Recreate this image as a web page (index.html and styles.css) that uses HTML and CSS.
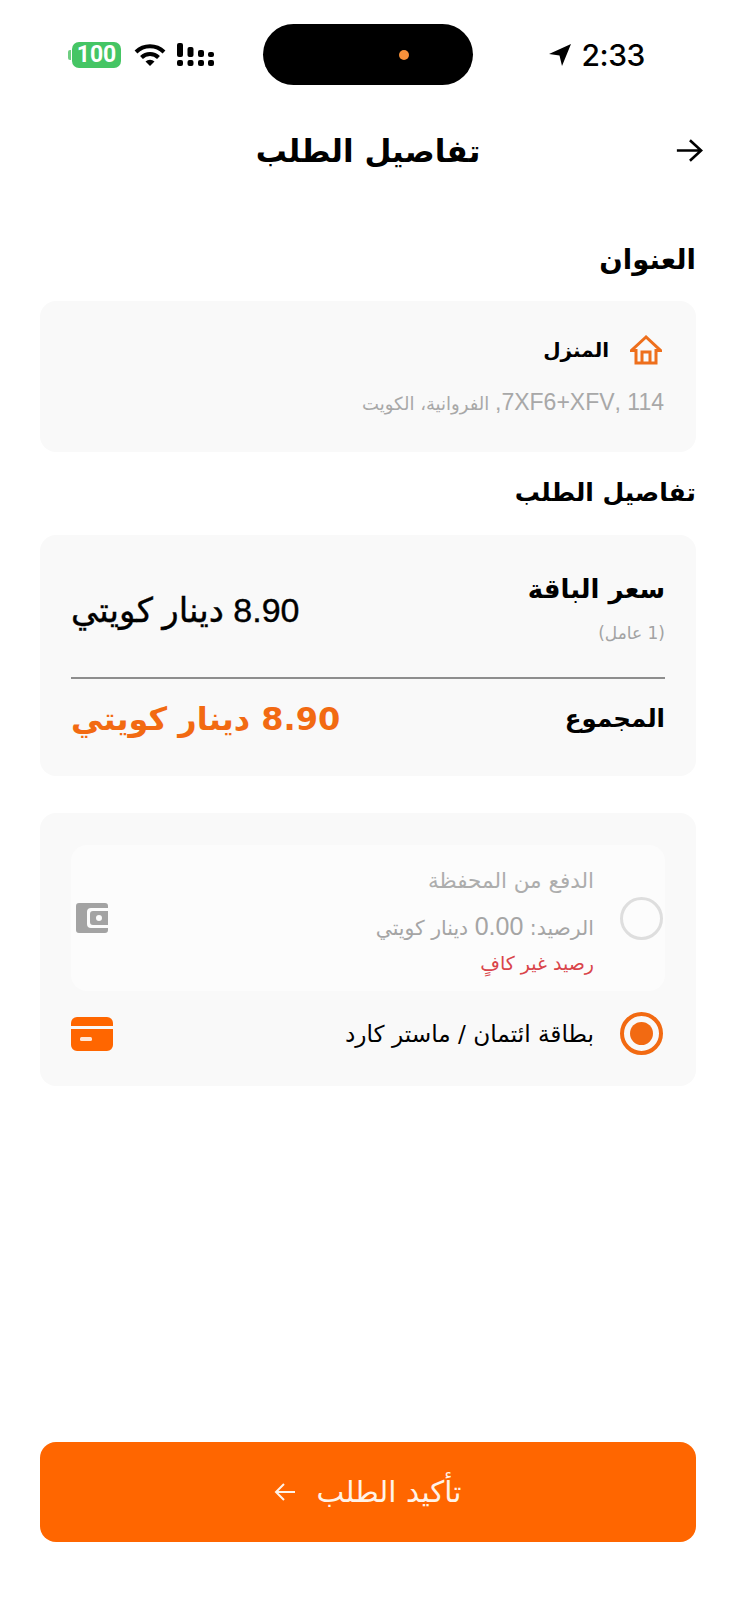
FILE: index.html
```html
<!DOCTYPE html>
<html lang="ar" dir="rtl">
<head>
<meta charset="utf-8">
<title>تفاصيل الطلب</title>
<link rel="stylesheet" href="styles.css">
</head>
<body>
<div class="page">
  <div class="status">
    <div class="status-side status-right" dir="ltr">
      <svg class="loc" viewBox="0 0 24 24" width="24" height="24"><path d="M23 1 1 11l10.5 1.500L14 23z" fill="#000"/></svg>
      <span class="time">2:33</span>
    </div>
    <div class="island"><span class="dot"></span></div>
    <div class="status-side status-left" dir="ltr">
      <span class="batt-nub"></span><span class="batt">100</span>
      <svg class="wifi" viewBox="0 0 32 24" width="32" height="24"><path d="M2 9a20 20 0 0 1 28 0M7.500 14.500a12 12 0 0 1 17 0" fill="none" stroke="#000" stroke-width="4"/><path d="M11.500 18.500a6.500 6.500 0 0 1 9 0L16 23z" fill="#000"/></svg>
      <svg class="signal" viewBox="0 0 38 24" width="38" height="24"><g fill="#000"><rect x="0" y="0" width="6" height="14" rx="2"/><rect x="0" y="17" width="6" height="6" rx="2"/><rect x="10.500" y="4" width="6" height="10" rx="2"/><rect x="10.500" y="17" width="6" height="6" rx="2"/><rect x="21" y="7" width="6" height="7" rx="2"/><rect x="21" y="17" width="6" height="6" rx="2"/><rect x="31" y="9" width="6" height="5" rx="2"/><rect x="31" y="17" width="6" height="6" rx="2"/></g></svg>
    </div>
  </div>

  <header class="topbar">
    <svg class="back" viewBox="0 0 30 26" width="28" height="25"><path d="M2 13h26M16 2l12 11-12 11" fill="none" stroke="#000" stroke-width="2.800"/></svg>
    <h1 class="page-title">تفاصيل الطلب</h1>
  </header>

  <main class="content">
    <h2 class="section-title first">العنوان</h2>
    <section class="card address">
      <div class="addr-head">
        <svg class="home" viewBox="0 0 32 30" width="32" height="30"><path d="M16 2 1.500 15.500H6V28h20V15.500h4.500z M12 28V17h8v11" fill="none" stroke="#ee6f1c" stroke-width="3" stroke-linejoin="miter"/></svg>
        <span class="addr-name">المنزل</span>
      </div>
      <p class="addr-line"><span class="latin-addr">114 ,7XF6+XFV,</span> الفروانية، الكويت</p>
    </section>

    <h2 class="section-title second">تفاصيل الطلب</h2>
    <section class="card order">
      <div class="row row-price">
        <div>
          <div class="label">سعر الباقة</div>
          <div class="note">(1 عامل)</div>
        </div>
        <div class="value">8.90 دينار كويتي</div>
      </div>
      <hr class="rule">
      <div class="row row-total">
        <div class="label total-label">المجموع</div>
        <div class="value-total">8.90 دينار كويتي</div>
      </div>
    </section>

    <section class="card pay">
      <div class="pay-wallet">
        <span class="radio"></span>
        <div class="pay-text">
          <div class="wallet-title">الدفع من المحفظة</div>
          <div class="wallet-bal">الرصيد: <span class="latin-bal">0.00</span> دينار كويتي</div>
          <div class="wallet-err">رصيد غير كافٍ</div>
        </div>
        <svg class="wallet-ico" viewBox="0 0 32 30" width="32" height="30"><path d="M3 0h26a3 3 0 0 1 3 3v2H15a4 4 0 0 0-4 4v12a4 4 0 0 0 4 4h17v2a3 3 0 0 1-3 3H3a3 3 0 0 1-3-3V3a3 3 0 0 1 3-3z" fill="#a3a3a3"/><path d="M17 8h15v14H17a3 3 0 0 1-3-3v-8a3 3 0 0 1 3-3zm6 4a3 3 0 1 0 0 6 3 3 0 0 0 0-6z" fill="#a3a3a3"/></svg>
      </div>
      <div class="pay-card">
        <span class="radio on"><span class="radio-dot"></span></span>
        <div class="card-label">بطاقة ائتمان / ماستر كارد</div>
        <svg class="card-ico" viewBox="0 0 42 34" width="42" height="34"><path d="M6 0h30a6 6 0 0 1 6 6v3H0V6a6 6 0 0 1 6-6zM0 12h42v16a6 6 0 0 1-6 6H6a6 6 0 0 1-6-6z" fill="#ff6600"/><rect x="9" y="20" width="12" height="4" rx="1.500" fill="#ffe6d5"/></svg>
      </div>
    </section>
  </main>

  <footer class="foot">
    <button class="confirm" type="button">
      <span>تأكيد الطلب</span>
      <svg class="btn-arrow" viewBox="0 0 22 18" width="22" height="18"><path d="M21 9H2M10 1 2 9l8 8" fill="none" stroke="#fff3e8" stroke-width="2"/></svg>
    </button>
  </footer>
</div>
</body>
</html>
```
FILE: styles.css
```css
* { box-sizing: border-box; }
html, body { margin: 0; padding: 0; background: #fff; }
body { font-family: "DejaVu Sans", "Liberation Sans", sans-serif; color: #000; }
.page { width: 736px; height: 1600px; display: flex; flex-direction: column; overflow: hidden; }

.status { display: grid; grid-template-columns: 1fr 210px 1fr; padding-top: 24px; height: 86px; }
.status-side { display: flex; align-items: center; height: 62px; }
.status-right { padding-right: 91px; gap: 9px; justify-content: flex-end; }
.time { font: 500 30px "Inter", sans-serif; letter-spacing: -0.4px; }
.island { height: 61px; border-radius: 31px; background: #000; display: flex; align-items: center; justify-content: center; }
.dot { width: 10px; height: 10px; border-radius: 50%; background: #f7913a; margin-right: -72px; }
.status-left { padding-left: 68px; }
.batt-nub { width: 3px; height: 10px; background: #6fce82; border-radius: 2px 0 0 2px; margin-right: 1px; }
.batt { width: 49px; height: 26px; border-radius: 7px; background: #45c564; color: #fff; font: 700 23px/26px "Roboto", sans-serif; text-align: center; }
.wifi { margin-left: 13px; }
.signal { margin-left: 11px; }

.topbar { position: relative; height: 140px; display: flex; align-items: center; justify-content: center; padding-bottom: 11px; }
.back { position: absolute; right: 33px; top: 52px; }
.page-title { margin: 0; font-size: 31px; font-weight: 700; line-height: 44px; }

.content { padding: 0 40px; display: flex; flex-direction: column; }
.section-title { margin: 0; font-weight: 700; line-height: 36px; }
.section-title.first { margin-top: 15px; height: 60px; font-size: 27.5px; }
.section-title.second { margin-top: 23px; height: 60px; font-size: 25px; }
.card { background: #f9f9f9; border-radius: 16px; }

.address { height: 151px; padding: 31px 32px 0; }
.addr-head { display: flex; align-items: center; gap: 21px; height: 36px; }
.home { flex: none; margin-right: 2px; }
.addr-name { font-size: 20px; font-weight: 700; }
.addr-line { margin: 19px 0 0; font-size: 18px; line-height: 30px; color: #a8a8a8; }
.latin-addr { font-family: "Liberation Sans", sans-serif; font-size: 23px; }

.order { height: 241px; padding: 35px 31px 0; }
.row { display: flex; justify-content: space-between; }
.row-price { height: 107px; align-items: flex-start; }
.label { font-size: 26px; font-weight: 700; line-height: 38px; }
.total-label { font-size: 24.5px; }
.note { font-size: 17px; color: #a3a3a3; line-height: 24px; margin-top: 13px; }
.value { font-family: "Liberation Sans", "DejaVu Sans", sans-serif; font-size: 34px; line-height: 40px; margin-top: 20px; -webkit-text-stroke: 0.4px #000; }
.rule { margin: 0; border: 0; height: 2px; background: #8e8e8e; }
.row-total { margin-top: 20px; align-items: center; height: 40px; }
.value-total { font-size: 32px; font-weight: 700; color: #f26a12; line-height: 44px; }

.pay { height: 273px; margin-top: 37px; padding: 32px 31px 0; display: flex; flex-direction: column; }
.pay-wallet { height: 146px; display: flex; align-items: center; gap: 26px; background: #fcfcfc; border-radius: 16px; padding: 0 2px 0 5px; }
.radio { flex: none; width: 43px; height: 43px; border-radius: 50%; border: 3px solid #dedede; display: flex; align-items: center; justify-content: center; }
.radio.on { border-color: #f26a12; border-width: 4px; }
.radio-dot { width: 23px; height: 23px; border-radius: 50%; background: #f26a12; }
.pay-text { flex: 1; padding-top: 2px; }
.wallet-title { font-size: 21.5px; line-height: 34px; color: #adadad; }
.wallet-bal { font-size: 20.4px; line-height: 32px; color: #a5a5a5; margin-top: 12px; }
.latin-bal { font-family: "Liberation Sans", sans-serif; font-size: 25px; }
.wallet-err { font-size: 19px; line-height: 24px; color: #d9444a; margin-top: 7px; }
.wallet-ico { flex: none; }
.pay-card { margin-top: 21px; display: flex; align-items: center; gap: 26px; height: 43px; padding-right: 2px; }
.card-label { flex: 1; font-size: 23.2px; line-height: 34px; }
.card-ico { flex: none; }

.foot { margin-top: auto; padding: 0 40px 58px; }
.confirm { width: 100%; height: 100px; border: 0; border-radius: 16px; background: #ff6600; color: #fff3e8; font: 400 29.5px "DejaVu Sans", sans-serif; display: flex; align-items: center; justify-content: center; gap: 20px; }
.btn-arrow { flex: none; }
```
